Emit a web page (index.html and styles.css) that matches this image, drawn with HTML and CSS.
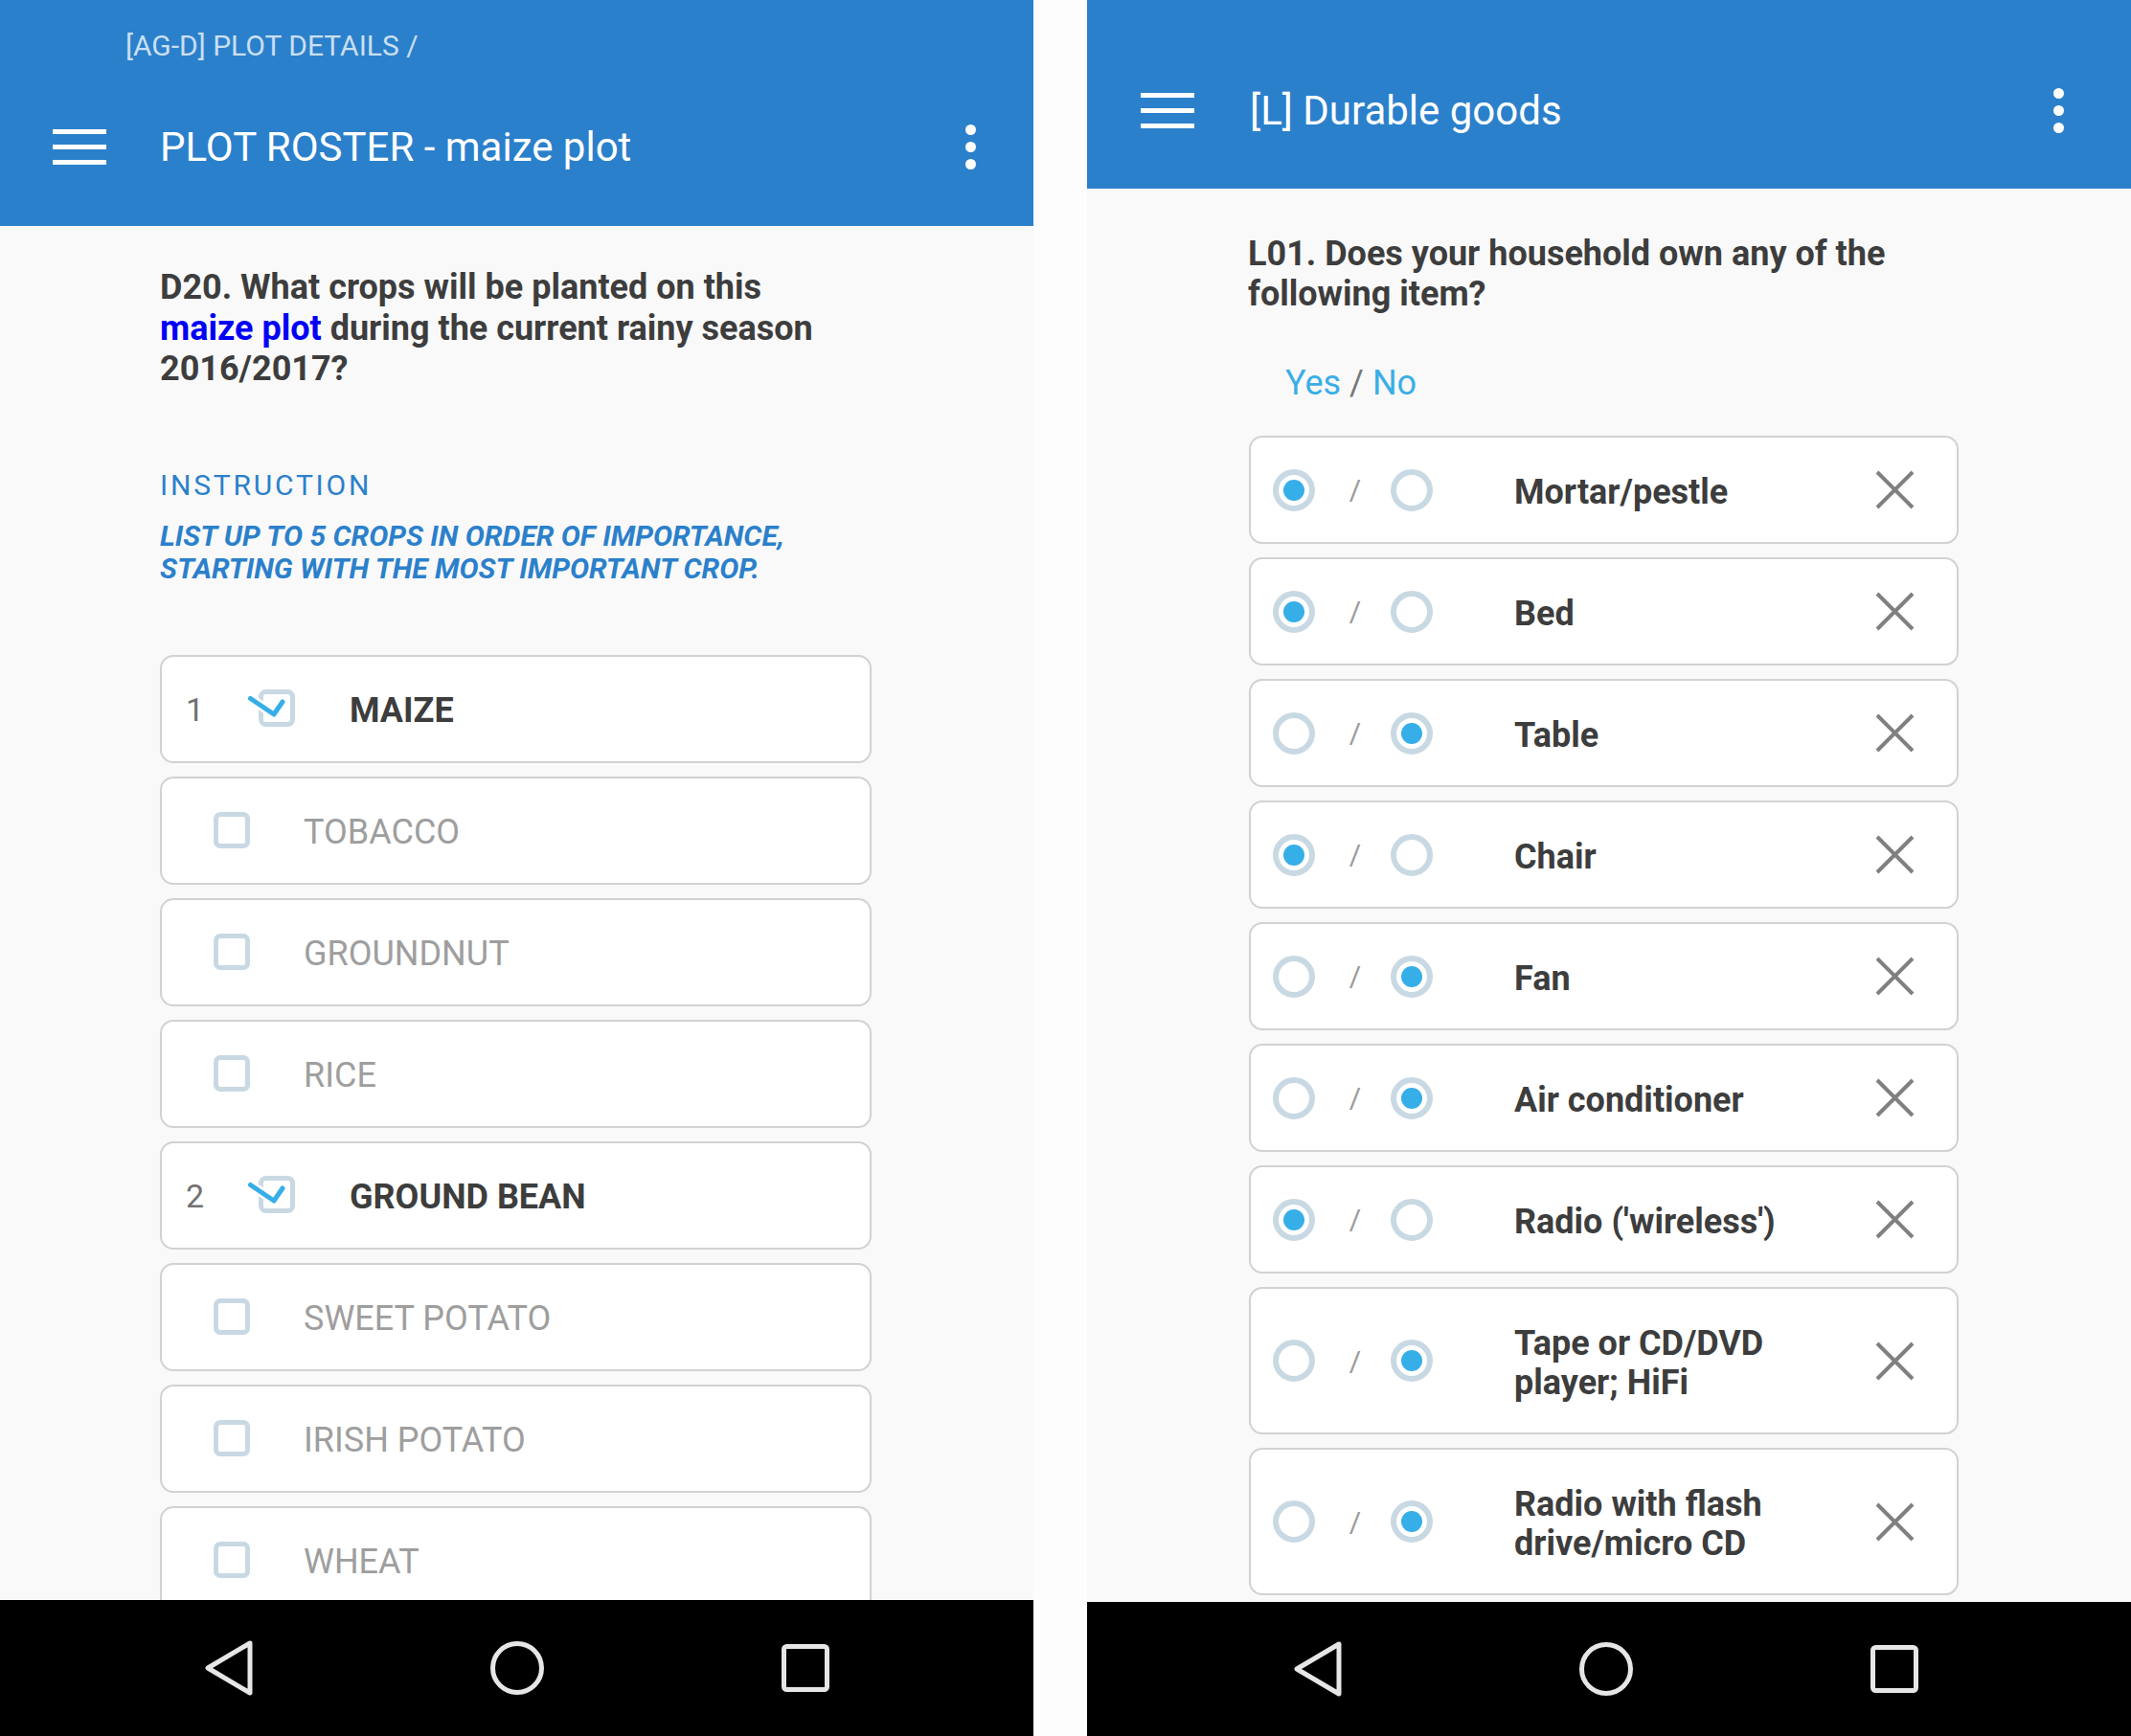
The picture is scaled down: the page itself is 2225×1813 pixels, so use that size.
FILE: index.html
```html
<!DOCTYPE html>
<html lang="en">
<head>
<meta charset="utf-8">
<title>Survey screens</title>
<link rel="stylesheet" href="styles.css">
</head>
<body>
<div class="screens">
  <section class="panel left">
    <header class="appbar">
      <div class="crumb">[AG-D] PLOT DETAILS /</div>
      <div class="toolbar">
        <div class="burger"><span></span><span></span><span></span></div>
        <div class="title">PLOT ROSTER - maize plot</div>
        <div class="kebab"><span></span><span></span><span></span></div>
      </div>
    </header>
    <main class="content">
      <div class="question">D20. What crops will be planted on this <span class="sub">maize plot</span> during the current rainy season 2016/2017?</div>
      <div class="instr-label">INSTRUCTION</div>
      <div class="instr-text">LIST UP TO 5 CROPS IN ORDER OF IMPORTANCE, STARTING WITH THE MOST IMPORTANT CROP.</div>
      <div class="cards">
        <div class="card checked">
          <span class="num">1</span>
          <svg class="check" width="50" height="40" viewBox="0 0 50 40"><rect x="13.5" y="2.5" width="33" height="34" rx="5" fill="none" stroke="#c9d9e3" stroke-width="5"/><path d="M2.5 9.5 L27 26 L36 13" fill="none" stroke="#ffffff" stroke-width="10" stroke-linecap="round" stroke-linejoin="round"/><path d="M2.5 9.5 L27 26 L36 13" fill="none" stroke="#36aee8" stroke-width="5" stroke-linecap="round" stroke-linejoin="round"/></svg>
          <span class="label">MAIZE</span>
        </div>
        <div class="card"><span class="box"></span><span class="label">TOBACCO</span></div>
        <div class="card"><span class="box"></span><span class="label">GROUNDNUT</span></div>
        <div class="card"><span class="box"></span><span class="label">RICE</span></div>
        <div class="card checked">
          <span class="num">2</span>
          <svg class="check" width="50" height="40" viewBox="0 0 50 40"><rect x="13.5" y="2.5" width="33" height="34" rx="5" fill="none" stroke="#c9d9e3" stroke-width="5"/><path d="M2.5 9.5 L27 26 L36 13" fill="none" stroke="#ffffff" stroke-width="10" stroke-linecap="round" stroke-linejoin="round"/><path d="M2.5 9.5 L27 26 L36 13" fill="none" stroke="#36aee8" stroke-width="5" stroke-linecap="round" stroke-linejoin="round"/></svg>
          <span class="label">GROUND BEAN</span>
        </div>
        <div class="card"><span class="box"></span><span class="label">SWEET POTATO</span></div>
        <div class="card"><span class="box"></span><span class="label">IRISH POTATO</span></div>
        <div class="card"><span class="box"></span><span class="label">WHEAT</span></div>
      </div>
    </main>
    <nav class="navbar">
      <svg width="50" height="58" viewBox="0 0 50 58"><path d="M47 3 L3 29 L47 55 Z" fill="none" stroke="#e6e6e6" stroke-width="5" stroke-linejoin="round"/></svg>
      <svg width="58" height="58" viewBox="0 0 58 58"><circle cx="29" cy="29" r="25.5" fill="none" stroke="#e6e6e6" stroke-width="5"/></svg>
      <svg width="50" height="50" viewBox="0 0 50 50"><rect x="2.5" y="2.5" width="45" height="45" rx="3" fill="none" stroke="#e6e6e6" stroke-width="5"/></svg>
    </nav>
  </section>

  <section class="panel right">
    <header class="appbar">
      <div class="toolbar">
        <div class="burger"><span></span><span></span><span></span></div>
        <div class="title">[L] Durable goods</div>
        <div class="kebab"><span></span><span></span><span></span></div>
      </div>
    </header>
    <main class="content">
      <div class="question">L01. Does your household own any of the following item?</div>
      <div class="yesno"><span class="opt">Yes</span> <span class="sep">/</span> <span class="opt">No</span></div>
      <div class="cards">
        <div class="card yn"><span class="radio on"></span><span class="slash">/</span><span class="radio"></span><span class="item">Mortar/pestle</span><svg class="x" width="41" height="41" viewBox="0 0 41 41"><path d="M2 2 L39 39 M39 2 L2 39" stroke="#808080" stroke-width="4"/></svg></div>
        <div class="card yn"><span class="radio on"></span><span class="slash">/</span><span class="radio"></span><span class="item">Bed</span><svg class="x" width="41" height="41" viewBox="0 0 41 41"><path d="M2 2 L39 39 M39 2 L2 39" stroke="#808080" stroke-width="4"/></svg></div>
        <div class="card yn"><span class="radio"></span><span class="slash">/</span><span class="radio on"></span><span class="item">Table</span><svg class="x" width="41" height="41" viewBox="0 0 41 41"><path d="M2 2 L39 39 M39 2 L2 39" stroke="#808080" stroke-width="4"/></svg></div>
        <div class="card yn"><span class="radio on"></span><span class="slash">/</span><span class="radio"></span><span class="item">Chair</span><svg class="x" width="41" height="41" viewBox="0 0 41 41"><path d="M2 2 L39 39 M39 2 L2 39" stroke="#808080" stroke-width="4"/></svg></div>
        <div class="card yn"><span class="radio"></span><span class="slash">/</span><span class="radio on"></span><span class="item">Fan</span><svg class="x" width="41" height="41" viewBox="0 0 41 41"><path d="M2 2 L39 39 M39 2 L2 39" stroke="#808080" stroke-width="4"/></svg></div>
        <div class="card yn"><span class="radio"></span><span class="slash">/</span><span class="radio on"></span><span class="item">Air conditioner</span><svg class="x" width="41" height="41" viewBox="0 0 41 41"><path d="M2 2 L39 39 M39 2 L2 39" stroke="#808080" stroke-width="4"/></svg></div>
        <div class="card yn"><span class="radio on"></span><span class="slash">/</span><span class="radio"></span><span class="item">Radio ('wireless')</span><svg class="x" width="41" height="41" viewBox="0 0 41 41"><path d="M2 2 L39 39 M39 2 L2 39" stroke="#808080" stroke-width="4"/></svg></div>
        <div class="card yn"><span class="radio"></span><span class="slash">/</span><span class="radio on"></span><span class="item">Tape or CD/DVD player; HiFi</span><svg class="x" width="41" height="41" viewBox="0 0 41 41"><path d="M2 2 L39 39 M39 2 L2 39" stroke="#808080" stroke-width="4"/></svg></div>
        <div class="card yn"><span class="radio"></span><span class="slash">/</span><span class="radio on"></span><span class="item">Radio with flash drive/micro CD</span><svg class="x" width="41" height="41" viewBox="0 0 41 41"><path d="M2 2 L39 39 M39 2 L2 39" stroke="#808080" stroke-width="4"/></svg></div>
      </div>
    </main>
    <nav class="navbar">
      <svg width="50" height="58" viewBox="0 0 50 58"><path d="M47 3 L3 29 L47 55 Z" fill="none" stroke="#e6e6e6" stroke-width="5" stroke-linejoin="round"/></svg>
      <svg width="58" height="58" viewBox="0 0 58 58"><circle cx="29" cy="29" r="25.5" fill="none" stroke="#e6e6e6" stroke-width="5"/></svg>
      <svg width="50" height="50" viewBox="0 0 50 50"><rect x="2.5" y="2.5" width="45" height="45" rx="3" fill="none" stroke="#e6e6e6" stroke-width="5"/></svg>
    </nav>
  </section>
</div>
</body>
</html>
```

FILE: styles.css
```css
* { box-sizing: border-box; }
html, body { margin: 0; padding: 0; }
body {
  background: #fdfdfd;
  font-family: Roboto, "Noto Sans", sans-serif;
  width: 2225px;
  height: 1813px;
  overflow: hidden;
}
.screens {
  display: flex;
  gap: 56px;
  height: 1813px;
}
.panel {
  display: flex;
  flex-direction: column;
  height: 1813px;
  background: #f9f9f9;
  overflow: hidden;
}
.panel.left { width: 1079px; flex: none; }
.panel.right { flex: 1; }

.appbar {
  background: #2b80cb;
  color: #fff;
  flex: none;
}
.left .appbar { height: 236px; }
.right .appbar { height: 197px; padding-top: 34px; }

.crumb {
  padding: 29px 0 0 131px;
  height: 67px;
  font-size: 30px;
  line-height: 38px;
  color: rgba(255, 255, 255, 0.75);
}
.toolbar {
  display: flex;
  align-items: center;
  height: 169px;
  padding: 4px 60px 0 55px;
}
.right .toolbar { height: 163px; padding: 0 70px 0 56px; }
.burger {
  width: 56px;
  display: flex;
  flex-direction: column;
  gap: 11px;
  flex: none;
}
.burger span { display: block; height: 5px; background: #fff; }
.title {
  flex: 1;
  margin-left: 56px;
  font-size: 42px;
  line-height: 48px;
  white-space: nowrap;
}
.right .title { margin-left: 58px; }
.kebab {
  display: flex;
  flex-direction: column;
  gap: 7px;
  flex: none;
}
.kebab span { display: block; width: 11px; height: 11px; border-radius: 50%; background: #fff; }

.content {
  flex: 1;
  overflow: hidden;
  padding-left: 167px;
}
.left .content { padding-top: 43px; }
.right .content { padding-top: 47px; padding-left: 168px; }

.question {
  width: 700px;
  font-size: 36px;
  line-height: 42.5px;
  font-weight: 700;
  color: #3d3d3d;
}
.right .question { line-height: 42px; width: 743px; }
.question .sub { color: #0000f5; }

.instr-label {
  margin-top: 82px;
  font-size: 30px;
  line-height: 36px;
  letter-spacing: 2.8px;
  color: #2b80cb;
}
.instr-text {
  margin-top: 18px;
  width: 743px;
  font-size: 30px;
  line-height: 34px;
  font-weight: 700;
  font-style: italic;
  color: #2b80cb;
}
.yesno {
  margin-top: 51px;
  padding-left: 39px;
  font-size: 36px;
  line-height: 42px;
  color: #777;
}
.yesno .opt { color: #3aaee6; }

.cards {
  display: flex;
  flex-direction: column;
  gap: 14px;
  width: 743px;
}
.left .cards { margin-top: 73px; }
.right .cards { margin-top: 34px; width: 741px; margin-left: 1px; }

.card {
  display: flex;
  align-items: center;
  background: #fff;
  border: 2px solid #d2d2d2;
  border-radius: 14px;
  min-height: 113px;
  flex: none;
}
.label {
  font-size: 36px;
  line-height: 41px;
  padding: 36px 0 32px;
  color: #9e9e9e;
  margin-left: 56px;
}
.card.checked .label {
  font-weight: 700;
  color: #3d3d3d;
}
.num {
  margin-left: 25px;
  width: 19px;
  font-size: 34px;
  line-height: 41px;
  padding-top: 2px;
  color: #717171;
}
.check { margin-left: 46px; flex: none; }
.box {
  margin-left: 54px;
  width: 38px;
  height: 38px;
  border: 5px solid #c9d9e3;
  border-radius: 7px;
  flex: none;
}

.radio {
  width: 44px;
  height: 44px;
  border-radius: 50%;
  border: 6px solid #c9d9e3;
  flex: none;
  display: flex;
  align-items: center;
  justify-content: center;
}
.radio:first-child { margin-left: 23px; }
.radio.on::after {
  content: "";
  width: 22px;
  height: 22px;
  border-radius: 50%;
  background: #36aee8;
}
.slash {
  width: 79px;
  padding-left: 5px;
  text-align: center;
  font-size: 30px;
  color: #9a9a9a;
  flex: none;
}
.item {
  flex: 1;
  margin-left: 85px;
  margin-right: 40px;
  padding: 37px 0 31px;
  font-size: 36px;
  line-height: 41px;
  font-weight: 700;
  color: #3d3d3d;
}
.x { flex: none; margin-right: 44px; }

.navbar {
  flex: none;
  height: 142px;
  background: #000;
  display: flex;
  align-items: center;
  gap: 247px;
  padding-left: 214px;
}
.right .navbar { height: 140px; padding-left: 216px; }
```
